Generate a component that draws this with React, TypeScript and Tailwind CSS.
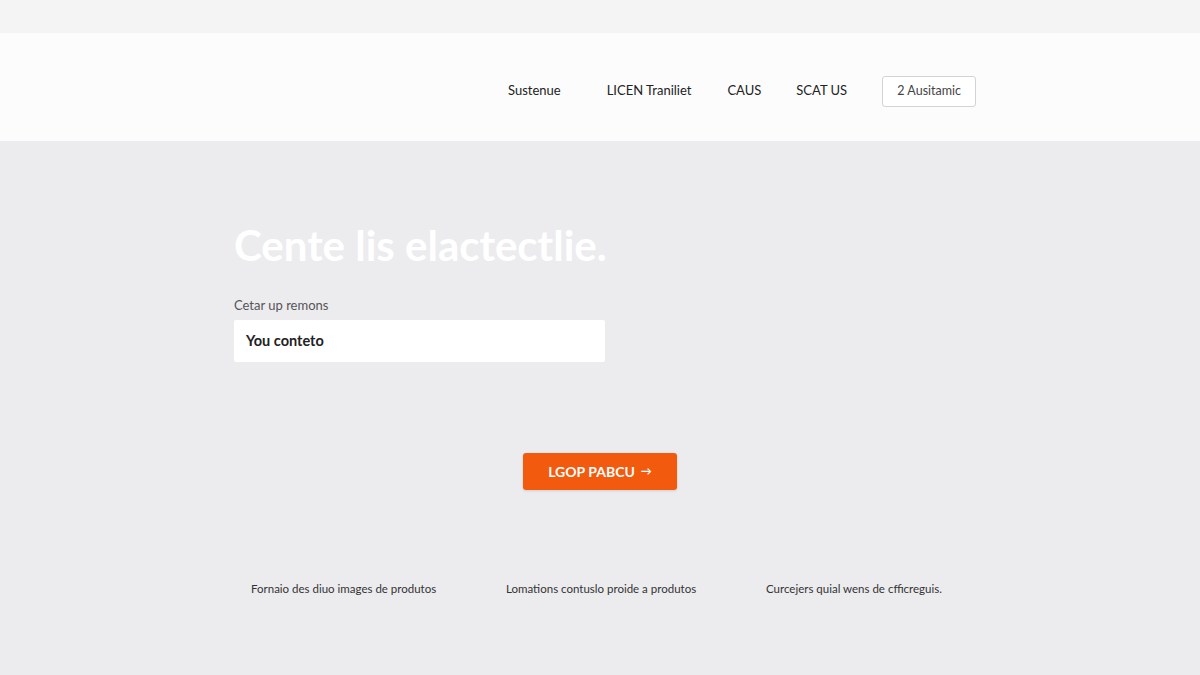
export default function App() {
  const navItems = ['Sustenue', 'LICEN Traniliet', 'CAUS', 'SCAT US'];
  const features = [
    'Fornaio des diuo images de produtos',
    'Lomations contuslo proide a produtos',
    'Curcejers quial wens de cfficreguis.',
  ];

  return (
    <div className="flex h-[675px] w-[1200px] flex-col overflow-hidden bg-[#ececef] font-['Lato',sans-serif] text-[#222]">
      {/* Top strip */}
      <div className="h-[33px] bg-[#f4f4f5]" />

      {/* Header */}
      <header className="flex h-[108px] items-center bg-[#fcfcfc] pl-[508px] pt-[8px]">
        <nav className="flex items-center text-[13px] text-[#222]">
          <a className="mr-[46px]">{navItems[0]}</a>
          <a className="mr-[36px]">{navItems[1]}</a>
          <a className="mr-[35px]">{navItems[2]}</a>
          <a className="mr-[35px]">{navItems[3]}</a>
        </nav>
        <button className="h-[31px] w-[94px] rounded-[3px] border border-[#d4d4d8] bg-white text-[12.5px] text-[#444]">
          2 Ausitamic
        </button>
      </header>

      {/* Hero */}
      <main className="flex flex-1 flex-col pl-[234px]">
        <h1 className="mt-[80px] text-[42px] font-bold leading-[48px] text-white">
          Cente lis elactectlie.
        </h1>
        <label className="mt-[27px] text-[13px] leading-[18px] text-[#555]">Cetar up remons</label>
        <div className="mt-[6px] flex h-[42px] w-[371px] items-center rounded-[2px] bg-white px-3 text-[14.5px] font-bold text-[#222]">
          You conteto
        </div>

        <div className="mt-[91px] flex w-[732px] justify-center">
          <button className="flex h-[37px] w-[154px] items-center justify-center gap-1.5 rounded-[3px] bg-[#f25a0e] text-[14px] font-bold text-white shadow-sm">
            LGOP PABCU <span className="text-[11px]">→</span>
          </button>
        </div>

        <div className="mt-[90px] flex text-[11.5px] text-[#333]">
          <p className="ml-[17px] w-[255px]">{features[0]}</p>
          <p className="w-[260px]">{features[1]}</p>
          <p>{features[2]}</p>
        </div>
      </main>
    </div>
  );
}
